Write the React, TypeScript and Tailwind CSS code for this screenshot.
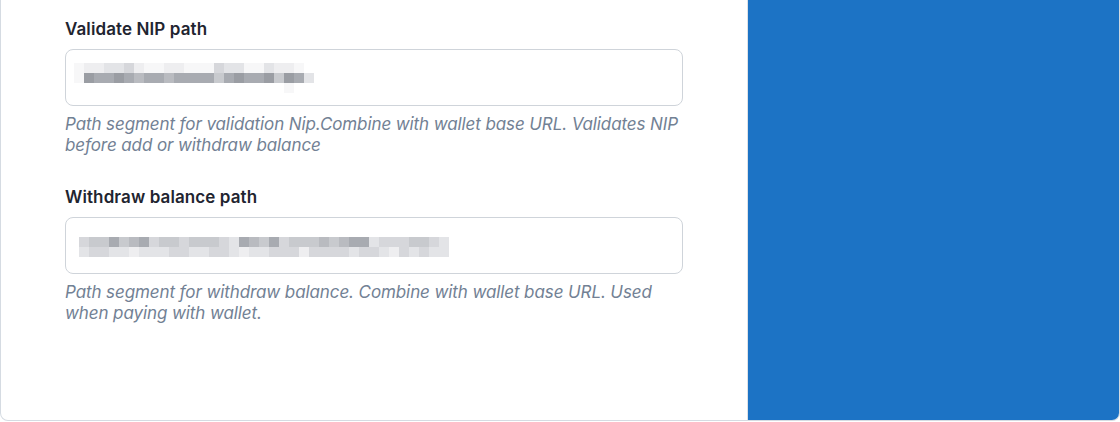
const grays = [
  'bg-[#f7f7f8]',
  'bg-[#eeeef0]',
  'bg-[#e3e4e7]',
  'bg-[#d6d7db]',
  'bg-[#c8cace]',
  'bg-[#b9bbc0]',
  'bg-[#a8abb1]',
  'bg-[#9a9da3]',
];

// pixelated (blurred) values in the inputs, 10px blocks
const firstValue = [
  [0, 1, 1, 2, 2, 3, 1, 0, 0, 1, 1, 0, 0, 0, 3, 2, 2, 0, 0, 2, 1, 1, 0],
  [0, 7, 6, 6, 7, 6, 5, 6, 6, 5, 6, 6, 6, 6, 4, 6, 7, 6, 6, 7, 4, 7, 6, 2],
  [-1, -1, -1, -1, -1, -1, -1, -1, -1, -1, -1, -1, -1, -1, -1, -1, -1, -1, -1, -1, -1, 0],
];

const secondValue = [
  [3, 4, 4, 6, 4, 5, 6, 3, 4, 4, 3, 4, 4, 4, 3, 2, 6, 5, 4, 6, 3, 4, 4, 4, 5, 4, 5, 6, 6, 2, 3, 3, 3, 4, 4, 3, 2],
  [2, 3, 3, 2, 2, 1, 2, 2, 2, 3, 3, 2, 2, 3, 3, 2, 1, 2, 2, 3, 3, 3, 1, 3, 3, 3, 3, 2, 3, 3, 2, 1, 3, 2, 3, 2, 2],
];

function Mosaic({ rows }: { rows: number[][] }) {
  return (
    <div className="flex flex-col">
      {rows.map((row, i) => (
        <div key={i} className="flex h-[10px]">
          {row.map((g, j) => (
            <div key={j} className={`h-[10px] w-[10px] ${g < 0 ? '' : grays[g]}`} />
          ))}
        </div>
      ))}
    </div>
  );
}

function Field({
  label,
  hint,
  children,
  inputClass,
}: {
  label: string;
  hint: string;
  children: React.ReactNode;
  inputClass: string;
}) {
  return (
    <div>
      <label className="block text-[17px] leading-6 font-semibold tracking-[0.1px] text-[#1f2530]">{label}</label>
      <div className={`mt-2 h-[57px] rounded-lg border border-[#cfd4da] bg-white ${inputClass}`}>
        {children}
      </div>
      <p className="mt-[8px] text-[17px] leading-[21px] italic tracking-[-0.1px] text-[#728194]">{hint}</p>
    </div>
  );
}

export default function App() {
  return (
    <div className="h-[422px] w-[1120px] bg-white font-['Inter',sans-serif]">
      <div className="flex h-[421px] overflow-hidden rounded-b-lg border-x border-b border-[#d5dbe2] bg-white">
        <div className="w-[747px] shrink-0 border-r border-[#dde1e6] px-16 pt-[17px]">
          <div className="flex flex-col gap-[29px]">
            <Field
              label="Validate NIP path"
              hint="Path segment for validation Nip.Combine with wallet base URL. Validates NIP before add or withdraw balance"
              inputClass="pl-[8px] pt-[13px]"
            >
              <Mosaic rows={firstValue} />
            </Field>
            <Field
              label="Withdraw balance path"
              hint="Path segment for withdraw balance. Combine with wallet base URL. Used when paying with wallet."
              inputClass="pl-[13px] pt-[19px]"
            >
              <Mosaic rows={secondValue} />
            </Field>
          </div>
        </div>
        <div className="flex-1 bg-[#1c73c5]" />
      </div>
    </div>
  );
}
